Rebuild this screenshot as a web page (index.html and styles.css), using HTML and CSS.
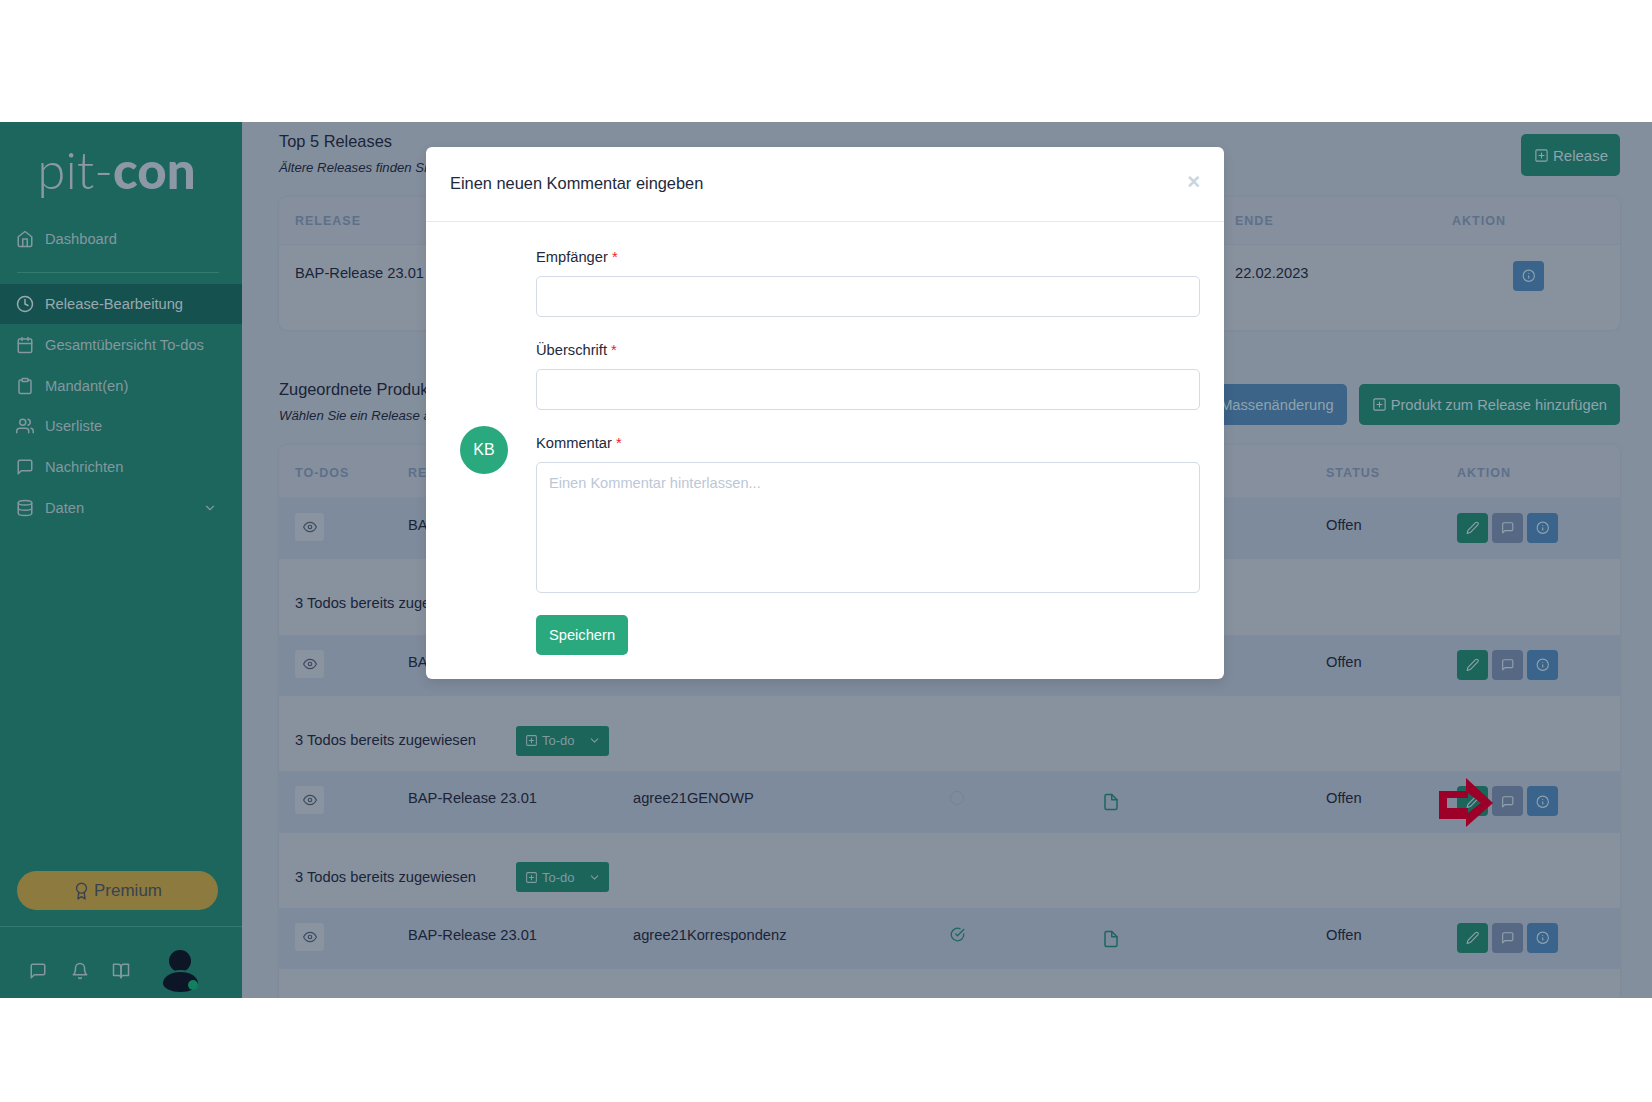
FILE: index.html
```html
<!DOCTYPE html>
<html lang="de">
<head>
    <meta charset="UTF-8">
    <meta name="viewport" content="width=device-width, initial-scale=1.0">
    <title>Release-Bearbeitung - pit-con</title>
    <link rel="stylesheet" href="styles.css">
</head>
<body>
    <!-- Icon sprite -->
    <svg class="sprite" xmlns="http://www.w3.org/2000/svg">
        <symbol id="i-home" viewBox="0 0 24 24"><path d="M3 9l9-7 9 7v11a2 2 0 0 1-2 2H5a2 2 0 0 1-2-2z"/><path d="M9 22V12h6v10"/></symbol>
        <symbol id="i-clock" viewBox="0 0 24 24"><circle cx="12" cy="12" r="10"/><path d="M12 6v6l4 2"/></symbol>
        <symbol id="i-calendar" viewBox="0 0 24 24"><rect x="3" y="4" width="18" height="18" rx="2"/><path d="M16 2v4M8 2v4M3 10h18"/></symbol>
        <symbol id="i-clipboard" viewBox="0 0 24 24"><path d="M16 4h2a2 2 0 0 1 2 2v14a2 2 0 0 1-2 2H6a2 2 0 0 1-2-2V6a2 2 0 0 1 2-2h2"/><rect x="8" y="2" width="8" height="4" rx="1"/></symbol>
        <symbol id="i-users" viewBox="0 0 24 24"><path d="M17 21v-2a4 4 0 0 0-4-4H5a4 4 0 0 0-4 4v2"/><circle cx="9" cy="7" r="4"/><path d="M23 21v-2a4 4 0 0 0-3-3.87M16 3.13a4 4 0 0 1 0 7.75"/></symbol>
        <symbol id="i-message" viewBox="0 0 24 24"><path d="M21 15a2 2 0 0 1-2 2H7l-4 4V5a2 2 0 0 1 2-2h14a2 2 0 0 1 2 2z"/></symbol>
        <symbol id="i-database" viewBox="0 0 24 24"><ellipse cx="12" cy="5" rx="9" ry="3"/><path d="M21 12c0 1.66-4 3-9 3s-9-1.34-9-3"/><path d="M3 5v14c0 1.66 4 3 9 3s9-1.34 9-3V5"/></symbol>
        <symbol id="i-chevron" viewBox="0 0 24 24"><path d="M6 9l6 6 6-6"/></symbol>
        <symbol id="i-award" viewBox="0 0 24 24"><circle cx="12" cy="8" r="7"/><path d="M8.21 13.89L7 23l5-3 5 3-1.21-9.12"/></symbol>
        <symbol id="i-bell" viewBox="0 0 24 24"><path d="M18 8A6 6 0 0 0 6 8c0 7-3 9-3 9h18s-3-2-3-9"/><path d="M13.73 21a2 2 0 0 1-3.46 0"/></symbol>
        <symbol id="i-book" viewBox="0 0 24 24"><path d="M2 3h6a4 4 0 0 1 4 4v14a3 3 0 0 0-3-3H2z"/><path d="M22 3h-6a4 4 0 0 0-4 4v14a3 3 0 0 1 3-3h7z"/></symbol>
        <symbol id="i-eye" viewBox="0 0 24 24"><path d="M1 12s4-8 11-8 11 8 11 8-4 8-11 8-11-8-11-8z"/><circle cx="12" cy="12" r="3"/></symbol>
        <symbol id="i-plus" viewBox="0 0 24 24"><rect x="3" y="3" width="18" height="18" rx="2"/><path d="M12 8v8M8 12h8"/></symbol>
        <symbol id="i-edit" viewBox="0 0 24 24"><path d="M17 3a2.828 2.828 0 1 1 4 4L7.5 20.5 2 22l1.5-5.5L17 3z"/></symbol>
        <symbol id="i-info" viewBox="0 0 24 24"><circle cx="12" cy="12" r="10"/><path d="M12 16v-4M12 8h.01"/></symbol>
        <symbol id="i-file" viewBox="0 0 24 24"><path d="M13 2H6a2 2 0 0 0-2 2v16a2 2 0 0 0 2 2h12a2 2 0 0 0 2-2V9z"/><path d="M13 2v7h7"/></symbol>
        <symbol id="i-check" viewBox="0 0 24 24"><path d="M22 11.08V12a10 10 0 1 1-5.93-9.14"/><path d="M22 4L12 14.01l-3-3"/></symbol>
    </svg>

    <div class="app">
        <aside class="sidebar">
            <div class="logo"><span class="logo-thin">pit-</span><span class="logo-bold">con</span></div>
            <a class="nav-item nav-first"><svg class="icon"><use href="#i-home"/></svg>Dashboard</a>
            <div class="nav-divider"></div>
            <a class="nav-item active"><svg class="icon"><use href="#i-clock"/></svg>Release-Bearbeitung</a>
            <a class="nav-item"><svg class="icon"><use href="#i-calendar"/></svg>Gesamtübersicht To-dos</a>
            <a class="nav-item"><svg class="icon"><use href="#i-clipboard"/></svg>Mandant(en)</a>
            <a class="nav-item"><svg class="icon"><use href="#i-users"/></svg>Userliste</a>
            <a class="nav-item"><svg class="icon"><use href="#i-message"/></svg>Nachrichten</a>
            <a class="nav-item"><svg class="icon"><use href="#i-database"/></svg>Daten<svg class="icon-small nav-chevron"><use href="#i-chevron"/></svg></a>
            <div class="sidebar-bottom">
                <div class="premium"><svg class="icon-premium"><use href="#i-award"/></svg>Premium</div>
                <div class="sidebar-footer">
                    <svg class="icon"><use href="#i-message"/></svg>
                    <svg class="icon"><use href="#i-bell"/></svg>
                    <svg class="icon"><use href="#i-book"/></svg>
                    <div class="user">
                        <div class="user-head"></div>
                        <div class="user-body"></div>
                        <div class="user-dot"></div>
                    </div>
                </div>
            </div>
        </aside>

        <main class="content">
            <section class="section-head section-releases">
                <div>
                    <h2>Top 5 Releases</h2>
                    <p>Ältere Releases finden Sie im Archiv</p>
                </div>
                <button class="btn btn-green btn-release"><svg class="icon-btn"><use href="#i-plus"/></svg>Release</button>
            </section>

            <div class="card">
                <div class="grid-top grid-head">
                    <div>RELEASE</div>
                    <div>ENDE</div>
                    <div>AKTION</div>
                </div>
                <div class="grid-top grid-body">
                    <div>BAP-Release 23.01</div>
                    <div>22.02.2023</div>
                    <div><button class="action action-blue action-center"><svg class="icon-action"><use href="#i-info"/></svg></button></div>
                </div>
            </div>

            <section class="section-head section-products">
                <div>
                    <h2>Zugeordnete Produkte</h2>
                    <p>Wählen Sie ein Release aus</p>
                </div>
                <div class="head-buttons">
                    <button class="btn btn-blue">Massenänderung</button>
                    <button class="btn btn-green"><svg class="icon-btn"><use href="#i-plus"/></svg>Produkt zum Release hinzufügen</button>
                </div>
            </section>

            <div class="card card-products">
                <div class="grid-products grid-head grid-head-products">
                    <div>TO-DOS</div><div>RELEASE</div><div></div><div></div><div></div><div>STATUS</div><div>AKTION</div>
                </div>

                <div class="grid-products row">
                    <div><button class="eye"><svg class="icon-small"><use href="#i-eye"/></svg></button></div>
                    <div>BAP-Release 23.01</div><div></div><div></div><div></div>
                    <div>Offen</div>
                    <div class="actions">
                        <button class="action action-green"><svg class="icon-action"><use href="#i-edit"/></svg></button>
                        <button class="action action-slate"><svg class="icon-action"><use href="#i-message"/></svg></button>
                        <button class="action action-blue"><svg class="icon-action"><use href="#i-info"/></svg></button>
                    </div>
                </div>
                <div class="group">3 Todos bereits zugewiesen
                    <button class="todo"><svg class="icon-todo"><use href="#i-plus"/></svg>To-do<svg class="icon-todo todo-chevron"><use href="#i-chevron"/></svg></button>
                </div>

                <div class="grid-products row">
                    <div><button class="eye"><svg class="icon-small"><use href="#i-eye"/></svg></button></div>
                    <div>BAP-Release 23.01</div><div></div><div></div><div></div>
                    <div>Offen</div>
                    <div class="actions">
                        <button class="action action-green"><svg class="icon-action"><use href="#i-edit"/></svg></button>
                        <button class="action action-slate"><svg class="icon-action"><use href="#i-message"/></svg></button>
                        <button class="action action-blue"><svg class="icon-action"><use href="#i-info"/></svg></button>
                    </div>
                </div>
                <div class="group">3 Todos bereits zugewiesen
                    <button class="todo"><svg class="icon-todo"><use href="#i-plus"/></svg>To-do<svg class="icon-todo todo-chevron"><use href="#i-chevron"/></svg></button>
                </div>

                <div class="grid-products row">
                    <div><button class="eye"><svg class="icon-small"><use href="#i-eye"/></svg></button></div>
                    <div>BAP-Release 23.01</div>
                    <div>agree21GENOWP</div>
                    <div><span class="status-empty"></span></div>
                    <div><svg class="icon-file"><use href="#i-file"/></svg></div>
                    <div>Offen</div>
                    <div class="actions">
                        <button class="action action-green"><svg class="icon-action"><use href="#i-edit"/></svg></button>
                        <button class="action action-slate"><svg class="icon-action"><use href="#i-message"/></svg></button>
                        <button class="action action-blue"><svg class="icon-action"><use href="#i-info"/></svg></button>
                        <svg class="pointer" viewBox="0 0 54 49"><path d="M0 13H27V0L54 25 27 49V41H0zM8 20H29V15L42 25 29 35V30H8z"/></svg>
                    </div>
                </div>
                <div class="group">3 Todos bereits zugewiesen
                    <button class="todo"><svg class="icon-todo"><use href="#i-plus"/></svg>To-do<svg class="icon-todo todo-chevron"><use href="#i-chevron"/></svg></button>
                </div>

                <div class="grid-products row">
                    <div><button class="eye"><svg class="icon-small"><use href="#i-eye"/></svg></button></div>
                    <div>BAP-Release 23.01</div>
                    <div>agree21Korrespondenz</div>
                    <div><svg class="icon-check"><use href="#i-check"/></svg></div>
                    <div><svg class="icon-file"><use href="#i-file"/></svg></div>
                    <div>Offen</div>
                    <div class="actions">
                        <button class="action action-green"><svg class="icon-action"><use href="#i-edit"/></svg></button>
                        <button class="action action-slate"><svg class="icon-action"><use href="#i-message"/></svg></button>
                        <button class="action action-blue"><svg class="icon-action"><use href="#i-info"/></svg></button>
                    </div>
                </div>
                <div class="group"></div>
            </div>
        </main>

        <div class="modal">
            <div class="modal-header">
                <h3>Einen neuen Kommentar eingeben</h3>
                <span class="modal-close">×</span>
            </div>
            <div class="modal-body">
                <div class="avatar">KB</div>
                <form class="modal-form">
                    <label>Empfänger <span class="req">*</span></label>
                    <input type="text">
                    <label>Überschrift <span class="req">*</span></label>
                    <input type="text">
                    <label>Kommentar <span class="req">*</span></label>
                    <textarea placeholder="Einen Kommentar hinterlassen..."></textarea>
                    <button type="button" class="save">Speichern</button>
                </form>
            </div>
        </div>
    </div>
</body>
</html>
```

FILE: styles.css
```css
* {
    box-sizing: border-box;
}

body {
    margin: 0;
    padding: 122px 0 104px;
    background: white;
    font-family: "Liberation Sans", Arial, sans-serif;
    font-size: 14.7px;
    color: #1a2438;
}

.sprite {
    display: none;
}

svg {
    fill: none;
    stroke: currentColor;
    stroke-width: 2;
    stroke-linecap: round;
    stroke-linejoin: round;
    flex-shrink: 0;
}

button {
    font-family: inherit;
    border: none;
    padding: 0;
}

.app {
    position: relative;
    display: flex;
    height: 876px;
    overflow: hidden;
}

/* Sidebar */
.sidebar {
    width: 242px;
    flex-shrink: 0;
    display: flex;
    flex-direction: column;
    background: #1d665e;
    color: #83989f;
}

.logo {
    height: 97px;
    padding: 18px 9px 0 0;
    text-align: center;
    font-family: Lato, sans-serif;
    font-size: 51px;
    line-height: 60px;
    color: #8c98a5;
}

.logo-thin {
    font-weight: 300;
}

.logo-bold {
    font-weight: 900;
}

.nav-item {
    display: flex;
    align-items: center;
    gap: 11px;
    height: 40.8px;
    padding-left: 16px;
    padding-right: 25px;
    line-height: 20px;
}

.nav-first {
    height: 40px;
}

.nav-divider {
    height: 1px;
    margin: 13px 23px 11px 17px;
    background: #347a73;
}

.nav-item.active {
    height: 40px;
    margin-bottom: 0.5px;
    background: #15524f;
    color: #9aa9b0;
}

.icon {
    width: 18px;
    height: 18px;
}

.icon-small {
    width: 14px;
    height: 14px;
}

.nav-chevron {
    margin-left: auto;
}

.sidebar-bottom {
    margin-top: auto;
}

.premium {
    display: flex;
    align-items: center;
    justify-content: center;
    gap: 4px;
    height: 39px;
    margin: 0 24px 16px 17px;
    border-radius: 20px;
    background: #8c7a3f;
    color: #39424f;
    font-size: 17px;
}

.icon-premium {
    width: 17px;
    height: 18px;
}

.sidebar-footer {
    display: flex;
    align-items: center;
    gap: 23.5px;
    height: 72px;
    padding: 16px 0 0 29px;
    border-top: 1px solid #347a73;
}

.user {
    position: relative;
    width: 36px;
    height: 42px;
    margin-left: 8.5px;
}

.user-head {
    width: 22px;
    height: 22px;
    margin: 0 auto;
    border-radius: 50%;
    background: #0c1626;
}

.user-body {
    width: 35px;
    height: 22px;
    margin: -2px auto 0;
    border-top: 2px solid #1d665e;
    border-radius: 50% 50% 50% 50% / 60% 60% 40% 40%;
    background: #0c1626;
}

.user-dot {
    position: absolute;
    right: 0;
    bottom: 2px;
    width: 10px;
    height: 10px;
    border-radius: 50%;
    background: #12805c;
}

/* Main content */
.content {
    flex: 1;
    min-width: 0;
    padding: 0 32px 0 37px;
    background: #848f9d;
}

.section-head {
    display: flex;
    justify-content: space-between;
}

.section-releases {
    height: 75px;
    padding-top: 9px;
}

.section-products {
    height: 66px;
    margin-top: 49px;
}

h2 {
    margin: 0;
    font-size: 16.4px;
    font-weight: 400;
    line-height: 20px;
}

p {
    margin: 8px 0 0;
    font-size: 13.2px;
    font-style: italic;
    line-height: 18px;
}

.btn {
    display: flex;
    align-items: center;
    gap: 4px;
    height: 41px;
    padding: 0 13px;
    border-radius: 5px;
    font-size: 14.7px;
    color: #8fa3ad;
}

.btn-release {
    width: 99px;
    height: 42px;
    margin-top: 3px;
    padding-top: 1px;
    font-size: 15px;
}

.btn-green {
    background: #1d665e;
}

.btn-blue {
    background: #3c6388;
}

.head-buttons {
    display: flex;
    gap: 12px;
    margin-top: 5px;
}

.icon-btn {
    width: 15px;
    height: 15px;
    stroke-width: 1.8;
}

.card {
    height: 133px;
    border-radius: 8px;
    background: #88929f;
    box-shadow: 0 0 2px rgba(70, 85, 105, 0.2);
}

.card-products {
    height: auto;
    margin-top: 0;
    border-radius: 8px 8px 0 0;
}

.grid-top {
    display: grid;
    grid-template-columns: 940px 217px 1fr;
    padding-left: 16px;
}

.grid-products {
    display: grid;
    grid-template-columns: 113px 225px 317px 152px 224px 131px 1fr;
    padding-left: 16px;
}

.grid-head {
    height: 48px;
    align-items: center;
    font-size: 12.5px;
    font-weight: 700;
    letter-spacing: 1px;
    color: #5e6f8a;
    background: #858f9d;
    border-bottom: 1px solid #818c9b;
    border-radius: 8px 8px 0 0;
}

.grid-head-products {
    height: 53px;
    padding-top: 3px;
}

.grid-body {
    height: 85px;
    padding-top: 17px;
    line-height: 22px;
}

.row {
    height: 61.2px;
    padding-top: 16px;
    line-height: 22px;
    background: #7e8b9c;
}

.group {
    display: flex;
    align-items: center;
    gap: 40px;
    height: 75.47px;
    padding: 13px 0 0 16px;
}

.todo {
    display: flex;
    align-items: center;
    gap: 4px;
    width: 93px;
    height: 30px;
    padding: 0 9px;
    margin-top: 1px;
    border-radius: 3px;
    background: #1b655b;
    color: #8199a1;
    font-size: 13px;
}

.icon-todo {
    width: 13px;
    height: 13px;
}

.todo-chevron {
    margin-left: auto;
    margin-right: -1px;
}

.eye {
    display: flex;
    align-items: center;
    justify-content: center;
    width: 29px;
    height: 28px;
    margin-top: -1px;
    border-radius: 3px;
    background: #8a94a1;
    color: #3d4a60;
}

.actions {
    position: relative;
    display: flex;
    gap: 4px;
    margin-top: -1px;
}

.action {
    display: flex;
    align-items: center;
    justify-content: center;
    width: 31px;
    height: 30px;
    border-radius: 4px;
    color: #8fa3ad;
}

.action-green {
    background: #1b655b;
}

.action-slate {
    background: #566883;
}

.action-blue {
    background: #3a648c;
}

.action-center {
    margin: -1px 0 0 61px;
}

.icon-action {
    width: 13.5px;
    height: 13.5px;
}

.status-empty {
    display: block;
    width: 14px;
    height: 14px;
    margin-top: 4px;
    border: 1.5px solid #76838f;
    border-radius: 50%;
}

.icon-check {
    display: block;
    width: 15px;
    height: 15px;
    margin-top: 3px;
    color: #1d665e;
}

.icon-file {
    display: block;
    width: 18px;
    height: 20px;
    margin-top: 5px;
    color: #1d665e;
}

/* Arrow drawn over the edit button */
.pointer {
    position: absolute;
    left: -18px;
    top: -8px;
    width: 54px;
    height: 49px;
    fill: #9c0029;
    fill-rule: evenodd;
    stroke: none;
}

/* Modal */
.modal {
    position: absolute;
    top: 25px;
    left: 426px;
    width: 798px;
    height: 532px;
    border-radius: 6px;
    background: white;
    box-shadow: 0 4px 12px rgba(0, 0, 0, 0.1);
    color: #1e293b;
}

.modal-header {
    display: flex;
    align-items: center;
    justify-content: space-between;
    height: 75px;
    padding: 0 24px 2px;
    border-bottom: 1px solid #e5e9ef;
}

h3 {
    margin: 0;
    font-size: 16.4px;
    font-weight: 400;
}

.modal-close {
    margin-top: -3px;
    font-size: 22px;
    font-weight: 700;
    color: #cbd5e1;
}

.modal-body {
    display: flex;
    align-items: center;
    height: 457px;
    padding-left: 34px;
}

.avatar {
    display: flex;
    align-items: center;
    justify-content: center;
    width: 48px;
    height: 48px;
    margin: 0 28px 2px 0;
    border-radius: 50%;
    background: #2aa87e;
    color: white;
    font-size: 16px;
}

.modal-form {
    display: flex;
    flex-direction: column;
    width: 664px;
}

label {
    height: 20px;
    margin-bottom: 9px;
    font-size: 14.7px;
    line-height: 20px;
}

.req {
    color: #ef1c25;
}

input,
textarea {
    display: block;
    width: 100%;
    border: 1px solid #d5dbe4;
    border-radius: 5px;
    background: white;
    font-family: inherit;
    font-size: 14.6px;
    resize: none;
}

input {
    height: 41px;
    margin-bottom: 23px;
}

textarea {
    height: 131px;
    margin-bottom: 22px;
    padding: 12px 12px;
}

textarea::placeholder {
    color: #bcc7d6;
    opacity: 1;
}

.save {
    width: 92px;
    height: 40px;
    border-radius: 5px;
    background: #2aa87e;
    color: white;
    font-size: 14.7px;
}
```
